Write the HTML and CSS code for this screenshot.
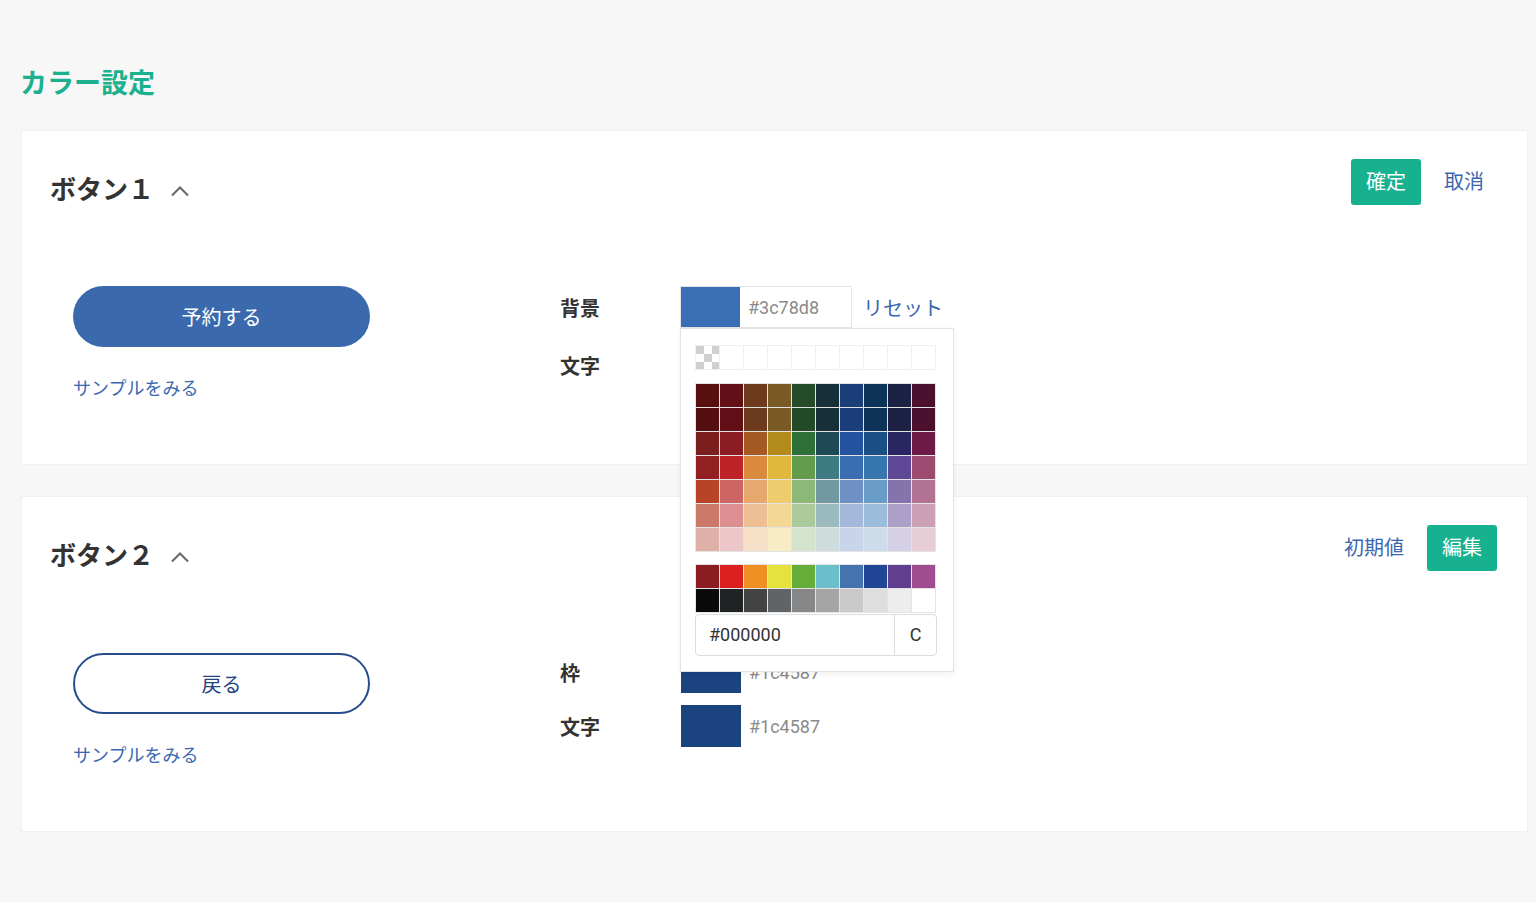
FILE: index.html
```html
<!DOCTYPE html>
<html lang="ja">
<head>
<meta charset="utf-8">
<title>カラー設定</title>
<link rel="stylesheet" href="styles.css">
</head>
<body>
<main class="page">
  <h1 class="page-title">カラー設定</h1>

  <section class="card">
    <header class="card-head">
      <div class="card-title">
        <h2>ボタン１</h2>
        <svg class="chevron" width="20" height="12" viewBox="0 0 20 12"><polyline points="2,10.5 10,2.5 18,10.5" fill="none" stroke="#666" stroke-width="2"/></svg>
      </div>
      <div class="actions">
        <button class="btn-green">確定</button>
        <a class="link">取消</a>
      </div>
    </header>
    <div class="card-body">
      <div class="preview">
        <div class="sample sample-filled">予約する</div>
        <a class="sample-link">サンプルをみる</a>
      </div>
      <div class="rows rows-edit">
        <div class="row">
          <span class="label">背景</span>
          <div class="edit-wrap">
            <div class="color-input">
              <span class="swatch" style="background:#3a6fb6"></span>
              <span class="hex">#3c78d8</span>
            </div>
            <a class="reset">リセット</a>
            <div class="picker">
              <div class="grid grid-trans">
                <span class="cell checker"></span><span class="cell"></span><span class="cell"></span><span class="cell"></span><span class="cell"></span><span class="cell"></span><span class="cell"></span><span class="cell"></span><span class="cell"></span><span class="cell"></span>
              </div>
              <div class="grid grid-main">
                <span class="cell" style="background:#58100f"></span><span class="cell" style="background:#630f17"></span><span class="cell" style="background:#6e3a1c"></span><span class="cell" style="background:#7a5a24"></span><span class="cell" style="background:#244a28"></span><span class="cell" style="background:#172f38"></span><span class="cell" style="background:#193e78"></span><span class="cell" style="background:#0c3358"></span><span class="cell" style="background:#1c2244"></span><span class="cell" style="background:#4a102e"></span>
                <span class="cell" style="background:#560f10"></span><span class="cell" style="background:#620e17"></span><span class="cell" style="background:#6c3a1c"></span><span class="cell" style="background:#795a25"></span><span class="cell" style="background:#234a27"></span><span class="cell" style="background:#162f39"></span><span class="cell" style="background:#193e79"></span><span class="cell" style="background:#0d3358"></span><span class="cell" style="background:#1c2143"></span><span class="cell" style="background:#4a102d"></span>
                <span class="cell" style="background:#7a1e1e"></span><span class="cell" style="background:#8c1c24"></span><span class="cell" style="background:#a55a24"></span><span class="cell" style="background:#b38a1c"></span><span class="cell" style="background:#2f6f38"></span><span class="cell" style="background:#1e4a55"></span><span class="cell" style="background:#2453a0"></span><span class="cell" style="background:#1c4e86"></span><span class="cell" style="background:#2a2662"></span><span class="cell" style="background:#6e1a46"></span>
                <span class="cell" style="background:#922023"></span><span class="cell" style="background:#bc2226"></span><span class="cell" style="background:#da8a3c"></span><span class="cell" style="background:#e0b83c"></span><span class="cell" style="background:#629c4c"></span><span class="cell" style="background:#3e7b82"></span><span class="cell" style="background:#3b6db3"></span><span class="cell" style="background:#3677b0"></span><span class="cell" style="background:#5e4896"></span><span class="cell" style="background:#9d4a70"></span>
                <span class="cell" style="background:#b84428"></span><span class="cell" style="background:#cc6464"></span><span class="cell" style="background:#e6a86c"></span><span class="cell" style="background:#eecb6c"></span><span class="cell" style="background:#8cb878"></span><span class="cell" style="background:#7299a2"></span><span class="cell" style="background:#6e90c4"></span><span class="cell" style="background:#6a9cc8"></span><span class="cell" style="background:#8574ac"></span><span class="cell" style="background:#b27294"></span>
                <span class="cell" style="background:#cc7868"></span><span class="cell" style="background:#dc8e90"></span><span class="cell" style="background:#eebe94"></span><span class="cell" style="background:#f2d894"></span><span class="cell" style="background:#aaca9c"></span><span class="cell" style="background:#9bbabe"></span><span class="cell" style="background:#a4b8dc"></span><span class="cell" style="background:#9cbcdc"></span><span class="cell" style="background:#ada0c8"></span><span class="cell" style="background:#cca0b4"></span>
                <span class="cell" style="background:#dfb0a8"></span><span class="cell" style="background:#ecc6c8"></span><span class="cell" style="background:#f6e0c8"></span><span class="cell" style="background:#f8ecc4"></span><span class="cell" style="background:#d4e4cc"></span><span class="cell" style="background:#cedcdc"></span><span class="cell" style="background:#c8d4ea"></span><span class="cell" style="background:#ccdcea"></span><span class="cell" style="background:#d6d0e6"></span><span class="cell" style="background:#e6cdd6"></span>
              </div>
              <div class="grid grid-basic">
                <span class="cell" style="background:#8b1c21"></span><span class="cell" style="background:#dc2020"></span><span class="cell" style="background:#ed9021"></span><span class="cell" style="background:#e5e13d"></span><span class="cell" style="background:#63ad38"></span><span class="cell" style="background:#6bbfca"></span><span class="cell" style="background:#4573b0"></span><span class="cell" style="background:#1f4594"></span><span class="cell" style="background:#623e8f"></span><span class="cell" style="background:#a04d90"></span>
                <span class="cell" style="background:#0a0a0a"></span><span class="cell" style="background:#202324"></span><span class="cell" style="background:#434343"></span><span class="cell" style="background:#606466"></span><span class="cell" style="background:#878787"></span><span class="cell" style="background:#a5a5a5"></span><span class="cell" style="background:#cacaca"></span><span class="cell" style="background:#dedede"></span><span class="cell" style="background:#ededed"></span><span class="cell" style="background:#ffffff"></span>
              </div>
              <div class="hex-field">
                <span class="hex-value">#000000</span>
                <span class="hex-clear">C</span>
              </div>
            </div>
          </div>
        </div>
        <div class="row">
          <span class="label">文字</span>
        </div>
      </div>
    </div>
  </section>

  <section class="card">
    <header class="card-head">
      <div class="card-title">
        <h2>ボタン２</h2>
        <svg class="chevron" width="20" height="12" viewBox="0 0 20 12"><polyline points="2,10.5 10,2.5 18,10.5" fill="none" stroke="#666" stroke-width="2"/></svg>
      </div>
      <div class="actions">
        <a class="link">初期値</a>
        <button class="btn-green">編集</button>
      </div>
    </header>
    <div class="card-body">
      <div class="preview">
        <div class="sample sample-outline">戻る</div>
        <a class="sample-link">サンプルをみる</a>
      </div>
      <div class="rows rows-view">
        <div class="row">
          <span class="label">枠</span>
          <span class="swatch swatch-view" style="background:#1b4380"></span>
          <span class="hex">#1c4587</span>
        </div>
        <div class="row">
          <span class="label">文字</span>
          <span class="swatch swatch-view" style="background:#1b4380"></span>
          <span class="hex">#1c4587</span>
        </div>
      </div>
    </div>
  </section>
</main>
</body>
</html>
```

FILE: styles.css
```css
* { box-sizing: border-box; }

html, body {
  margin: 0;
  padding: 0;
  background: #f7f7f7;
  font-family: Roboto, "Noto Sans CJK JP", sans-serif;
  color: #333;
}

.page {
  padding: 0 8px 60px 21px;
}

.page-title {
  margin: 64px 0 26px -1px;
  font-size: 27px;
  line-height: 40px;
  font-weight: 700;
  color: #1bb08e;
}

.card {
  background: #fff;
  border: 1px solid #f0f0f0;
  padding: 28px 30px 62px 28px;
  margin-bottom: 31px;
}

.card-head {
  display: flex;
  justify-content: space-between;
  align-items: flex-start;
  height: 46px;
}

.card-title {
  display: flex;
  align-items: center;
  padding-top: 13px;
}

.card-title h2 {
  margin: 0;
  font-size: 26px;
  line-height: 36px;
  font-weight: 700;
  color: #333;
}

.chevron {
  margin-left: 16px;
  margin-top: 2px;
}

.actions {
  display: flex;
  align-items: center;
  gap: 10px;
  height: 46px;
}

.btn-green {
  height: 46px;
  padding: 0 15px;
  border: none;
  border-radius: 3px;
  background: #17b190;
  color: #fff;
  font-family: Roboto, "Noto Sans CJK JP", sans-serif;
  font-size: 20px;
  line-height: 46px;
}

.link {
  padding: 0 13px;
  font-size: 20px;
  line-height: 46px;
  color: #3a68b0;
}

.card-body {
  display: flex;
  margin-top: 81px;
  padding-left: 23px;
}

.preview {
  width: 487px;
  flex: none;
}

.sample {
  width: 297px;
  height: 61px;
  border-radius: 31px;
  display: flex;
  align-items: center;
  justify-content: center;
  font-size: 20px;
}

.sample-filled {
  background: #3a6aad;
  color: #fff;
}

.sample-outline {
  margin-top: 1px;
  border: 2px solid #274c8c;
  color: #24467f;
  background: #fff;
}

.sample-link {
  display: block;
  margin-top: 29px;
  font-size: 18px;
  line-height: 26px;
  color: #3a68b0;
}

.rows {
  display: flex;
  flex-direction: column;
}

.rows-edit { gap: 16px; }
.rows-view { gap: 12px; margin-top: -1px; }

.row {
  display: flex;
  align-items: center;
  height: 42px;
}

.label {
  width: 120px;
  flex: none;
  font-size: 20px;
  font-weight: 700;
  color: #333;
}

.edit-wrap {
  position: relative;
  display: flex;
  align-items: center;
}

.color-input {
  display: flex;
  align-items: center;
  width: 172px;
  height: 42px;
  border: 1px solid #e6e6e6;
}

.swatch {
  display: block;
  width: 59px;
  height: 40px;
  flex: none;
}

.swatch-view {
  width: 60px;
  height: 42px;
  margin-left: 1px;
}

.hex {
  margin-left: 8px;
  font-size: 18px;
  color: #8a8a8a;
}

.reset {
  margin-left: 11px;
  font-size: 20px;
  color: #3a68b0;
}

.picker {
  position: absolute;
  top: 42px;
  left: 0;
  width: 274px;
  background: #fff;
  border: 1px solid #e2e2e2;
  box-shadow: 0 2px 6px rgba(0, 0, 0, 0.06);
  padding: 16px 16px 15px 14px;
  z-index: 10;
}

.grid {
  display: grid;
  grid-template-columns: repeat(10, 23px);
  grid-auto-rows: 23px;
  gap: 1px;
  width: 241px;
}

.grid-trans {
  background: #efefef;
  border: 1px solid #efefef;
}

.grid-trans .cell { background: #fff; }

.grid-trans .checker {
  background: repeating-conic-gradient(#fff 0 25%, #cfcfcf 0 50%) 0 0 / 16px 16px;
}

.grid-main {
  margin-top: 13px;
  background: #e3e3e3;
  border: 1px solid #e3e3e3;
}

.grid-basic {
  margin-top: 12px;
  background: #e3e3e3;
  border: 1px solid #e3e3e3;
}

.cell { display: block; }

.hex-field {
  display: flex;
  margin-top: 1px;
  width: 242px;
  height: 42px;
  border: 1px solid #dcdcdc;
  border-radius: 4px;
}

.hex-value {
  flex: 1;
  padding-left: 13px;
  font-size: 18px;
  line-height: 40px;
  color: #333;
}

.hex-clear {
  width: 42px;
  border-left: 1px solid #dcdcdc;
  text-align: center;
  font-size: 18px;
  line-height: 40px;
  color: #333;
}
```
